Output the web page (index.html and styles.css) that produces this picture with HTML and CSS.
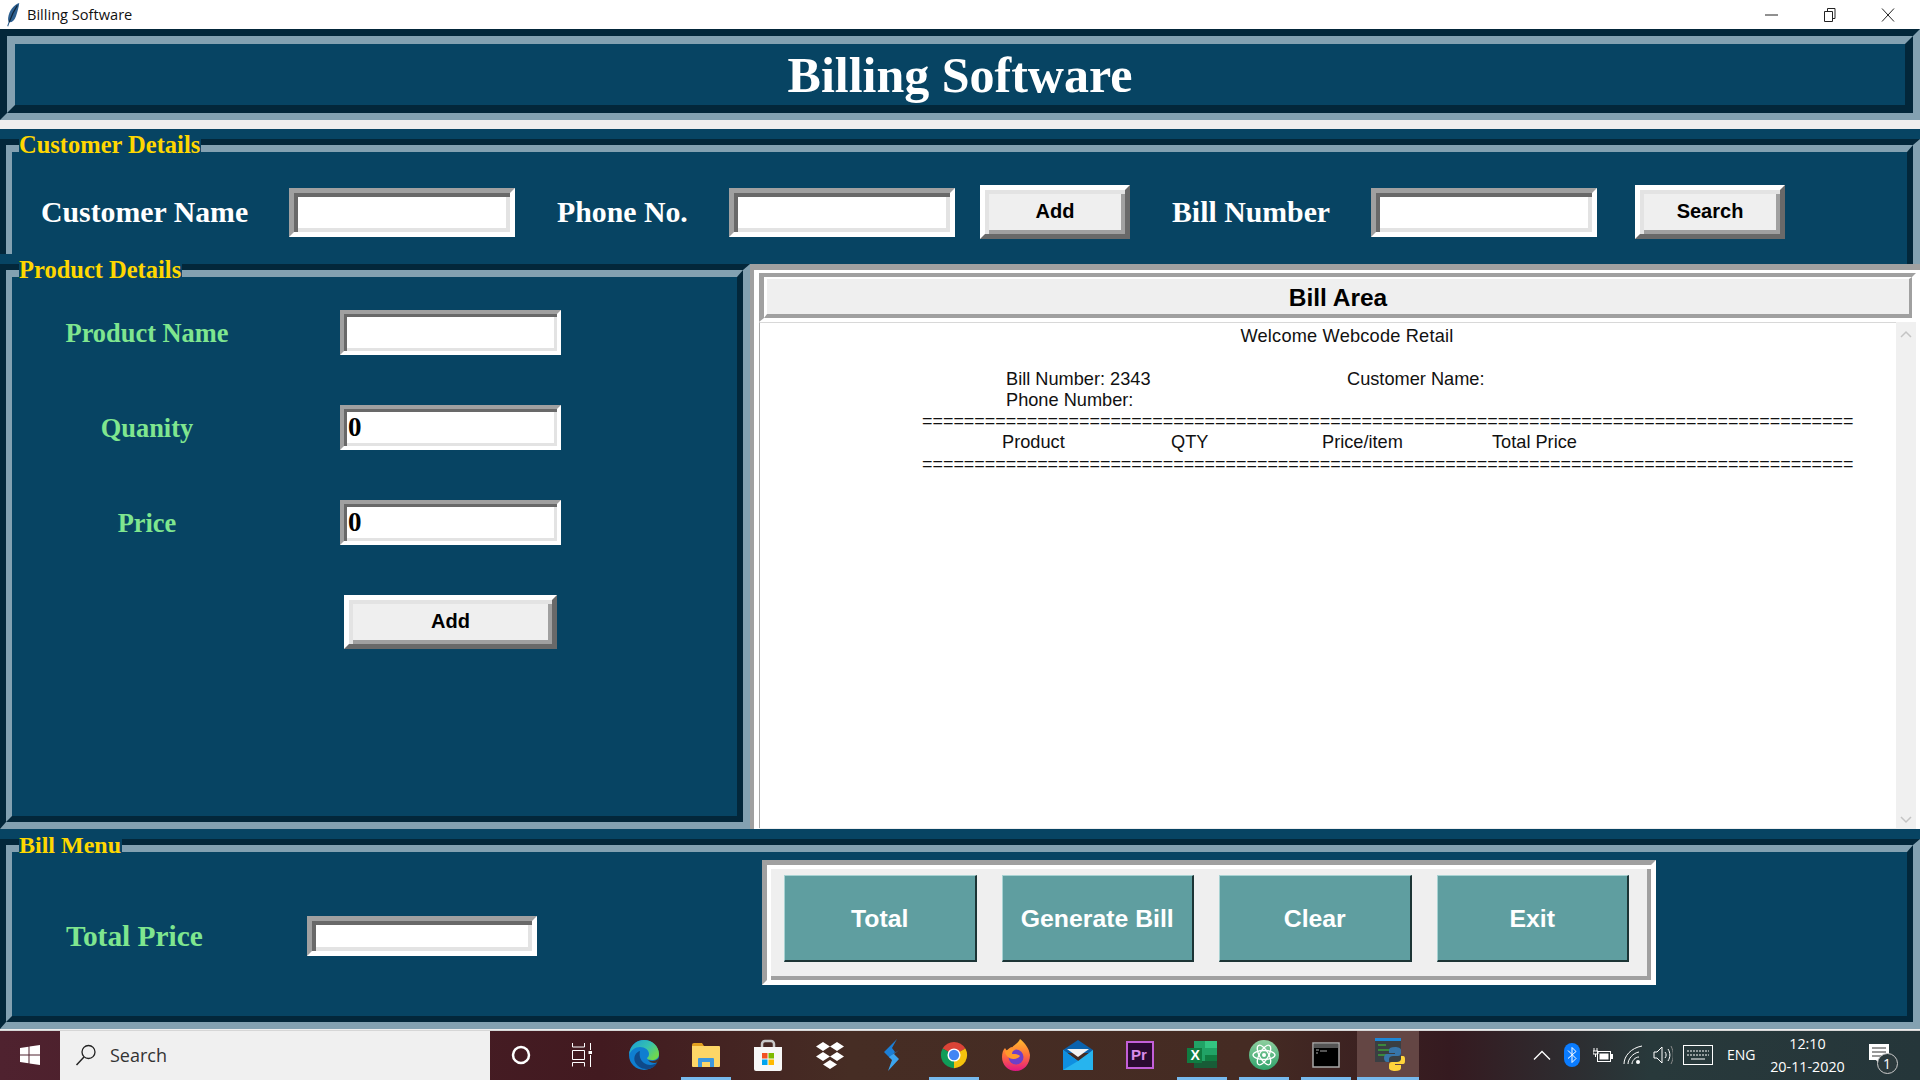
FILE: index.html
```html
<!DOCTYPE html>
<html lang="en">
<head>
    <meta charset="UTF-8">
    <meta name="viewport" content="width=device-width, initial-scale=1.0">
    <title>Billing Software</title>
    <link rel="stylesheet" href="styles.css">
</head>
<body>
    <div class="titlebar">
        <svg class="titlebar__icon" viewBox="0 0 16 26"><path d="M14.500 1C9 2.500 4 9 3 16c-.3 2 0 3.500.5 4.500L2 25l1 .5 1.500-4.500c3 0 5-2 6.500-6 1.500-4.500 3-9.500 3.500-14z" fill="#2d5f8f"/><path d="M12.500 3.500C9.500 8 6.500 14 4 21" stroke="#0f2438" stroke-width="1.200" fill="none"/></svg>
        <span class="titlebar__text">Billing Software</span>
        <div class="titlebar__controls">
            <svg viewBox="0 0 14 16"><path d="M0 8h13" stroke="#222" fill="none"/></svg>
            <svg viewBox="0 0 14 16"><path d="M1.500 4.500h8v10h-8zM4.500 4.500v-3h7.500v10h-2.500" stroke="#222" fill="none"/></svg>
            <svg viewBox="0 0 14 16"><path d="M1 1.500l12 13M13 1.500l-12 13" stroke="#222" fill="none"/></svg>
        </div>
    </div>

    <div class="app">
        <header class="header">
            <div class="header__in">
                <h1>Billing Software</h1>
            </div>
        </header>

        <section class="frame frame--customer">
            <span class="frame__legend">Customer Details</span>
            <div class="groove groove--open">
                <div class="groove__in">
                    <div class="customer-row">
                        <label class="field-label">Customer Name</label>
                        <div class="entry"></div>
                        <label class="field-label field-label--indent">Phone No.</label>
                        <div class="entry"></div>
                        <button class="btn btn--right">Add</button>
                        <label class="field-label field-label--indent">Bill Number</label>
                        <div class="entry"></div>
                        <button class="btn btn--right">Search</button>
                    </div>
                </div>
            </div>
        </section>

        <div class="main">
            <section class="frame frame--product">
                <span class="frame__legend">Product Details</span>
                <div class="groove">
                    <div class="groove__in">
                        <div class="product-form">
                            <label class="product-label">Product Name</label>
                            <div class="entry entry--small"></div>
                            <label class="product-label">Quanity</label>
                            <div class="entry entry--small">0</div>
                            <label class="product-label">Price</label>
                            <div class="entry entry--small">0</div>
                            <button class="btn btn--add">Add</button>
                        </div>
                    </div>
                </div>
            </section>

            <section class="bill">
                <div class="bill__in">
                    <div class="bill__title">
                        <div class="bill__title-in">Bill Area</div>
                    </div>
                    <div class="bill__body">
                        <div class="bill__text">
                            <div class="bill__center">Welcome Webcode Retail</div>
                            <div class="bill__row bill__row--blank"></div>
                            <div class="bill__row bill__row--info"><span class="bill__c-info">Bill Number: 2343</span><span>Customer Name:</span></div>
                            <div class="bill__row bill__row--info"><span>Phone Number:</span></div>
                            <div class="bill__row bill__row--rule">=========================================================================================</div>
                            <div class="bill__row bill__row--head"><span class="bill__c1">Product</span><span class="bill__c2">QTY</span><span class="bill__c3">Price/item</span><span>Total Price</span></div>
                            <div class="bill__row bill__row--rule">=========================================================================================</div>
                        </div>
                        <div class="scrollbar">
                            <svg viewBox="0 0 12 8"><path d="M1 7l5-5 5 5" stroke="#c4c4c4" stroke-width="1.500" fill="none"/></svg>
                            <svg viewBox="0 0 12 8"><path d="M1 1l5 5 5-5" stroke="#c4c4c4" stroke-width="1.500" fill="none"/></svg>
                        </div>
                    </div>
                </div>
            </section>
        </div>

        <section class="frame frame--menu">
            <span class="frame__legend">Bill Menu</span>
            <div class="groove">
                <div class="groove__in">
                    <div class="menu-row">
                        <div class="total">
                            <label class="product-label product-label--total">Total Price</label>
                            <div class="entry entry--total"></div>
                        </div>
                        <div class="actions">
                            <button class="action">Total</button>
                            <button class="action">Generate Bill</button>
                            <button class="action">Clear</button>
                            <button class="action">Exit</button>
                        </div>
                    </div>
                </div>
            </div>
        </section>
    </div>

    <footer class="taskbar">
        <div class="taskbar__start">
            <svg width="20" height="20" viewBox="0 0 20 20"><path d="M0 3l8.500-1.300v7.700H0zM9.500 1.500L20 0v9.400H9.500zM0 10.500h8.500v7.800L0 17zM9.500 10.500H20V20L9.500 18.500z" fill="#fff"/></svg>
        </div>
        <div class="taskbar__search">
            <svg width="22" height="22" viewBox="0 0 22 22"><circle cx="13.500" cy="8" r="6.500" stroke="#222" stroke-width="1.300" fill="none"/><path d="M9 13l-7.500 8" stroke="#222" stroke-width="1.500"/></svg>
            <span>Search</span>
        </div>

        <div class="slot slot--narrow">
            <svg width="20" height="20" viewBox="0 0 20 20"><circle cx="10" cy="10" r="8" stroke="#fff" stroke-width="2.500" fill="none"/></svg>
        </div>
        <div class="slot slot--narrow">
            <svg width="20" height="24" viewBox="0 0 20 24"><path d="M.500 0v4h12V0M.500 23.500v-4h12v4M.500 7.500h12v9H.500zM18.500 0v7M18.500 12v12" stroke="#fff" fill="none"/><rect x="16.500" y="8" width="4" height="3" fill="#fff"/></svg>
        </div>
        <div class="slot">
            <svg width="32" height="32" viewBox="0 0 32 32">
                <defs>
                    <linearGradient id="edgeTop" x1="0" y1="0" x2="1" y2="0.600"><stop offset="0" stop-color="#1a9bd8"/><stop offset="0.600" stop-color="#35c1b0"/><stop offset="1" stop-color="#6fd84f"/></linearGradient>
                </defs>
                <circle cx="16" cy="16" r="15" fill="#0f7ed0"/>
                <path d="M1 16C2 6 9 1 16 1c8 0 15 6 15 14 0 4-3 6-7 6-3 0-5-1-5-2 1-1 2-2 2-4 0-4-4-7-9-7-5 0-9 3-11 8z" fill="url(#edgeTop)"/>
                <path d="M12 12c-4 1-7 6-5 11 2 4 6 7 11 7 5 0 9-2 11-6-3 2-9 3-13 0-4-3-5-8-4-12z" fill="#0f4a8a"/>
                <path d="M20 21c4 2 8 1 11-2l-1 4c-3 2-8 1-10-2z" fill="#46302a"/>
            </svg>
        </div>
        <div class="slot slot--active">
            <svg width="30" height="26" viewBox="0 0 30 26"><path d="M1 3a2 2 0 0 1 2-2h8l2 3H1z" fill="#e2a01f"/><path d="M1 4h27a1 1 0 0 1 1 1v19a1 1 0 0 1-1 1H2a1 1 0 0 1-1-1z" fill="#fdd667"/><path d="M7 25v-8a1 1 0 0 1 1-1h14a1 1 0 0 1 1 1v8h-4v-5h-8v5z" fill="#3d98de"/></svg>
        </div>
        <div class="slot">
            <svg width="30" height="32" viewBox="0 0 30 32"><path d="M9 10V5a3 3 0 0 1 3-3h6a3 3 0 0 1 3 3v5" stroke="#c9c9c9" stroke-width="2.500" fill="none"/><path d="M1 8h28v22a2 2 0 0 1-2 2H3a2 2 0 0 1-2-2z" fill="#f7f7f7"/><rect x="9" y="14" width="5.500" height="5.500" fill="#f25022"/><rect x="15.500" y="14" width="5.500" height="5.500" fill="#7fba00"/><rect x="9" y="20.500" width="5.500" height="5.500" fill="#00a4ef"/><rect x="15.500" y="20.500" width="5.500" height="5.500" fill="#ffb900"/></svg>
        </div>
        <div class="slot">
            <svg width="30" height="28" viewBox="0 0 30 28"><path d="M8 1l7 4.500-7 4.500-7-4.500zM22 1l7 4.500-7 4.500-7-4.500zM8 11l7 4.500-7 4.500-7-4.500zM22 11l7 4.500-7 4.500-7-4.500zM15 19l7 4.500-7 4.500-7-4.500z" fill="#fff"/></svg>
        </div>
        <div class="slot">
            <svg width="18" height="32" viewBox="0 0 18 32"><path d="M14 0L1 13l6 6 5-6-3-4z" fill="#1c7fd6"/><path d="M16 11l-5 4 5 5-11 12 4-11-3-3z" fill="#3ca5ef"/></svg>
        </div>
        <div class="slot slot--active">
            <svg width="30" height="30" viewBox="0 0 32 32"><path d="M16 16L3.880 9A14 14 0 0 1 28.120 9z" fill="#db4437"/><path d="M16 16L28.120 9A14 14 0 0 1 16 30z" fill="#f4c20d"/><path d="M16 16L16 30A14 14 0 0 1 3.880 9z" fill="#0f9d58"/><circle cx="16" cy="16" r="7" fill="#fff"/><circle cx="16" cy="16" r="5.500" fill="#4285f4"/></svg>
        </div>
        <div class="slot">
            <svg width="30" height="32" viewBox="0 0 30 32">
                <defs><linearGradient id="foxBody" x1="0" y1="0" x2="0" y2="1"><stop offset="0" stop-color="#ffbd2e"/><stop offset="0.500" stop-color="#ff7139"/><stop offset="1" stop-color="#e31587"/></linearGradient></defs>
                <path d="M19 0c5 4 9 9 10 16 0 9-6 16-14 16S1 26 1 18c0-4 1-7 3-9l2 3c1-2 3-4 6-4-2 0 5-3 7-8z" fill="url(#foxBody)"/>
                <circle cx="15" cy="18" r="7.500" fill="#6e3fc8"/>
                <path d="M4 12c3-2 8-3 11-1-3 0-4 2-4 4 3 0 6 0 8 2-3 4-10 4-13 0-1-1-2-3-2-5z" fill="#ff9a2b"/>
            </svg>
        </div>
        <div class="slot">
            <svg width="30" height="30" viewBox="0 0 30 30"><path d="M0 10L15 0l15 10v3H0z" fill="#0a62ad"/><path d="M0 10l15 11 15-11v20H0z" fill="#27b4ee"/><path d="M0 30V10l15 11z" fill="#0f8fe0"/><path d="M4 9h22l-11 8z" fill="#f3f3f3"/></svg>
        </div>
        <div class="slot">
            <svg width="28" height="28" viewBox="0 0 28 28"><rect x="1" y="1" width="26" height="26" fill="#2a0a30" stroke="#c35fd8" stroke-width="2"/><text class="icon-pr" x="5" y="19">Pr</text></svg>
        </div>
        <div class="slot slot--active">
            <svg width="30" height="28" viewBox="0 0 30 28"><rect x="7" y="0" width="23" height="27" fill="#21a366"/><rect x="18" y="0" width="12" height="7" fill="#33c481"/><rect x="18" y="14" width="12" height="7" fill="#107c41"/><rect x="7" y="20" width="23" height="7" fill="#185c37"/><rect x="0" y="7" width="15" height="15" fill="#107c41"/><text class="icon-xl" x="3.500" y="19">X</text></svg>
        </div>
        <div class="slot slot--active">
            <svg width="30" height="30" viewBox="0 0 30 30">
                <defs><linearGradient id="atomBody" x1="0" y1="0" x2="0" y2="1"><stop offset="0" stop-color="#8fcf9f"/><stop offset="1" stop-color="#2ea36a"/></linearGradient></defs>
                <circle cx="15" cy="15" r="15" fill="url(#atomBody)"/>
                <g fill="none" stroke="#fff" stroke-width="1.300"><ellipse cx="15" cy="15" rx="11" ry="4.500"/><ellipse cx="15" cy="15" rx="11" ry="4.500" transform="rotate(60 15 15)"/><ellipse cx="15" cy="15" rx="11" ry="4.500" transform="rotate(120 15 15)"/></g>
                <circle cx="15" cy="15" r="2" fill="#fff"/>
            </svg>
        </div>
        <div class="slot slot--active">
            <svg width="28" height="26" viewBox="0 0 28 26"><rect x="1" y="1" width="26" height="24" fill="#000" stroke="#a9a9a9" stroke-width="1.500"/><rect x="2" y="2" width="24" height="4" fill="#555"/><path d="M4 8h3M4 11h2M8 9h7" stroke="#aaa"/></svg>
        </div>
        <div class="slot slot--current">
            <svg class="slot__python" width="30" height="34" viewBox="0 0 30 34"><rect x="0" y="0" width="26" height="24" fill="#3a3f43"/><rect x="0" y="0" width="26" height="3" fill="#1f88d8"/><path d="M3 7h8M3 12h14M3 17h9" stroke="#3da13b" stroke-width="1.500"/><path d="M20 9c-4 0-6 1-6 3v3h6v1h-8c-2 0-3 2-3 4s1 4 3 4h2v-3c0-2 2-3 4-3h5c2 0 3-1 3-3v-3c0-2-3-3-6-3z" fill="#3775a9"/><path d="M20 33c4 0 6-1 6-3v-3h-6v-1h8c2 0 2-2 2-4s0-4-2-4h-2v3c0 2-2 3-4 3h-5c-2 0-3 1-3 3v3c0 2 3 3 6 3z" fill="#ffd43b"/></svg>
        </div>

        <div class="tray">
            <svg class="tray__chevron" width="18" height="12" viewBox="0 0 18 12"><path d="M1 10.500l8-8 8 8" stroke="#fff" stroke-width="1.300" fill="none"/></svg>
            <svg class="tray__bt" width="16" height="24" viewBox="0 0 16 24"><rect width="16" height="24" rx="8" fill="#0a7cff"/><path d="M4 7.500l8 8-4 4V4.500l4 4-8 7" stroke="#fff" fill="none"/></svg>
            <svg class="tray__battery" width="20" height="16" viewBox="0 0 20 16"><path d="M1 1v3M4 1v3M0 4h5v3H0zM2.500 7v3" stroke="#fff" fill="none"/><rect x="4.500" y="4.500" width="13" height="10" fill="none" stroke="#fff"/><rect x="6.500" y="6.500" width="9" height="6" fill="#fff"/><rect x="18" y="7" width="2" height="5" fill="#fff"/></svg>
            <svg class="tray__wifi" width="20" height="20" viewBox="0 0 20 20"><path d="M1 19C1 11 8 3 19 1M5 19c0-5 5-11 11-12M9 19c0-3 3-7 7-7" stroke="#fff" fill="none"/><circle cx="15" cy="17" r="2" fill="#fff"/></svg>
            <svg class="tray__volume" width="20" height="20" viewBox="0 0 20 20"><path d="M1 7h3l5-5v16l-5-5H1zM12 7c1.500 2 1.500 4 0 6M15 4c2.500 4 2.500 8 0 12" stroke="#fff" fill="none"/><path d="M18 1c3 6 3 12 0 18" stroke="#8a8a8a" fill="none"/></svg>
            <svg class="tray__keyboard" width="30" height="20" viewBox="0 0 30 20"><rect x=".5" y=".5" width="29" height="19" fill="none" stroke="#fff"/><path d="M4 6h22M4 10h22" stroke="#fff" stroke-dasharray="2 1" fill="none"/><path d="M8 14h14" stroke="#fff" fill="none"/></svg>
            <span class="tray__lang">ENG</span>
            <div class="tray__clock"><span>12:10</span><span>20-11-2020</span></div>
            <div class="tray__notify">
                <svg width="22" height="22" viewBox="0 0 22 22"><path d="M1 1h20v16H1z" fill="#fff"/><path d="M4 5h14M4 9h14M4 13h10" stroke="#333"/><path d="M8 17l4 5 1-5z" fill="#fff"/></svg>
                <span class="tray__badge">1</span>
            </div>
        </div>
    </footer>
</body>
</html>
```
FILE: styles.css
```css
* {
    box-sizing: border-box;
}

html, body {
    margin: 0;
    padding: 0;
}

body {
    width: 1920px;
    height: 1080px;
    overflow: hidden;
    background-color: #efefef;
    font-family: "Liberation Sans", Arial, sans-serif;
}

/* window title bar */
.titlebar {
    display: flex;
    align-items: center;
    height: 29px;
    padding-left: 5px;
    background-color: #fff;
}

.titlebar__icon {
    width: 16px;
    height: 25px;
}

.titlebar__text {
    margin-left: 6px;
    margin-top: -2px;
    font-family: "Open Sans", sans-serif;
    font-size: 14.600px;
    color: #111;
}

.titlebar__controls {
    display: flex;
    gap: 44px;
    margin-left: auto;
    padding-right: 25px;
}

.titlebar__controls svg {
    width: 14px;
    height: 16px;
}

/* main window */
.app {
    height: 1001px;
    background-color: #efefef;
}

.header {
    height: 91px;
    border-style: solid;
    border-width: 7px;
    border-color: #03273a #83a1b1 #83a1b1 #03273a;
}

.header__in {
    height: 77px;
    border-style: solid;
    border-width: 8px;
    border-color: #83a1b1 #03273a #03273a #83a1b1;
    background-color: #074463;
    text-align: center;
}

.header__in h1 {
    margin: 0;
    font-family: "Liberation Serif", "Times New Roman", serif;
    font-size: 50px;
    font-weight: bold;
    line-height: 62px;
    color: #fff;
}

.frame {
    position: relative;
    padding-top: 10px;
    background-color: #074463;
}

.frame__legend {
    position: absolute;
    left: 19px;
    top: 0;
    height: 32px;
    padding-right: 1px;
    font-family: "Liberation Serif", "Times New Roman", serif;
    font-size: 24.500px;
    font-weight: bold;
    line-height: 32px;
    color: #ffd700;
    background-color: #074463;
}

.frame--customer {
    margin-top: 9px;
    height: 135px;
}

.frame--product {
    width: 750px;
    height: 575px;
    margin-top: -10px;
    flex: none;
}

.frame--menu {
    height: 200px;
}

.frame--menu .frame__legend {
    font-size: 24px;
}

/* tk groove relief: two nested borders */
.groove {
    height: 100%;
    border-style: solid;
    border-width: 6px 7px 7px 6px;
    border-color: #03273a #83a1b1 #83a1b1 #03273a;
}

.groove__in {
    height: 100%;
    border-style: solid;
    border-width: 7px 6px 6px 6px;
    border-color: #83a1b1 #03273a #03273a #83a1b1;
}

.groove--open {
    border-bottom-width: 0;
}

.groove--open .groove__in {
    border-bottom-width: 0;
}

.customer-row {
    display: grid;
    grid-template-columns: 247px 226px 214px 226px 175px 241px 226px 188px;
    align-items: center;
    padding-top: 33px;
    padding-left: 30px;
    height: 87px;
}

.field-label {
    margin-left: -1px;
    font-family: "Liberation Serif", "Times New Roman", serif;
    font-size: 29.800px;
    font-weight: bold;
    color: #fff;
}

.field-label--indent {
    padding-left: 43px;
}

/* sunken entry */
.entry {
    height: 49px;
    border-style: solid;
    border-width: 5px;
    border-color: #a0a0a0 #fff #fff #a0a0a0;
    background-color: #fff;
    box-shadow: inset 4px 4px 0 #696969, inset -4px -4px 0 #e3e3e3;
    padding-left: 4px;
    font-family: "Liberation Serif", "Times New Roman", serif;
    font-size: 27px;
    font-weight: bold;
    line-height: 35px;
    color: #000;
}

.entry--small {
    height: 45px;
    border-width: 4px;
    box-shadow: inset 3px 3px 0 #696969, inset -3px -3px 0 #e3e3e3;
    line-height: 36px;
}

.entry--total {
    width: 230px;
    height: 40px;
}

.btn {
    width: 150px;
    height: 54px;
    padding: 0 0 2px;
    border-style: solid;
    border-width: 5px;
    border-color: #fff #696969 #696969 #fff;
    background-color: #efefef;
    box-shadow: inset 4px 4px 0 #e3e3e3, inset -4px -4px 0 #a0a0a0;
    font-family: "Liberation Sans", Arial, sans-serif;
    font-size: 20px;
    font-weight: bold;
    color: #000;
}

.btn--right {
    justify-self: end;
}

.btn--add {
    grid-column: 2;
    justify-self: center;
    width: 213px;
}

.main {
    display: flex;
    height: 565px;
}

.product-form {
    display: grid;
    grid-template-columns: 328px 221px;
    grid-auto-rows: 45px;
    row-gap: 50px;
    align-items: center;
    padding-top: 33px;
}

.product-label {
    width: 270px;
    padding-top: 2px;
    font-family: "Liberation Serif", "Times New Roman", serif;
    font-size: 26.400px;
    font-weight: bold;
    text-align: center;
    color: #7fe68f;
}

.product-form .btn--add {
    align-self: start;
}

/* bill area */
.bill {
    flex: 1;
    background-color: #efefef;
    border-top: 6px solid #a0a0a0;
    border-left: 4px solid #a0a0a0;
}

.bill__in {
    display: flex;
    flex-direction: column;
    height: 100%;
    border-top: 3px solid #fff;
    border-left: 5px solid #fff;
    border-right: 4px solid #fff;
}

.bill__title {
    height: 49px;
    border-style: solid;
    border-width: 4px 4px 4px 5px;
    border-color: #a0a0a0 #fff #fff #a0a0a0;
}

.bill__title-in {
    height: 41px;
    border-style: solid;
    border-width: 2px 3px 4px 3px;
    border-color: #fff #a0a0a0 #a0a0a0 #fff;
    background-color: #efefef;
    font-size: 24.500px;
    font-weight: bold;
    line-height: 37px;
    text-align: center;
    color: #000;
}

.bill__body {
    display: flex;
    flex: 1;
    padding-bottom: 1px;
}

.bill__text {
    flex: 1;
    padding-top: 3px;
    background-color: #fff;
    border-top: 1px solid #d8d8d8;
    border-left: 1px solid #a8a8a8;
    font-size: 18.200px;
    line-height: 21.300px;
    color: #111;
}

.bill__center {
    padding-left: 38px;
    letter-spacing: 0.200px;
    text-align: center;
}

.bill__row {
    display: flex;
    height: 21.300px;
    white-space: nowrap;
}

.bill__row--info {
    padding-left: 246px;
}

.bill__c-info {
    width: 341px;
}

.bill__row--rule {
    padding-left: 162px;
    font-size: 17.930px;
}

.bill__row--head {
    padding-left: 242px;
}

.bill__c1 {
    width: 169px;
}

.bill__c2 {
    width: 151px;
}

.bill__c3 {
    width: 170px;
}

.scrollbar {
    display: flex;
    flex-direction: column;
    justify-content: space-between;
    align-items: center;
    width: 20px;
    padding: 8px 0 4px;
    background-color: #f0f0f0;
}

.scrollbar svg {
    width: 12px;
    height: 8px;
}

/* bill menu */
.menu-row {
    display: flex;
    align-items: flex-start;
    padding-left: 54px;
}

.total {
    display: flex;
    align-items: center;
    margin-top: 64px;
}

.product-label--total {
    width: 241px;
    padding-top: 0;
    font-size: 29.400px;
    text-align: left;
}

.actions {
    display: flex;
    gap: 25px;
    width: 894px;
    height: 125px;
    margin-top: 8px;
    margin-left: 225px;
    padding: 10px 0 0 17px;
    border-style: solid;
    border-width: 5px;
    border-color: #a0a0a0 #fff #fff #a0a0a0;
    background-color: #efefef;
    box-shadow: inset 4px 4px 0 #fff, inset -4px -4px 0 #a0a0a0;
}

.action {
    width: 192.500px;
    height: 87px;
    padding: 2px 0 0;
    border-style: solid;
    border-width: 1px 2px 2px 1px;
    border-color: #a8d2d2 #1c3435 #1c3435 #a8d2d2;
    background-color: #5f9ea0;
    font-family: "Liberation Sans", Arial, sans-serif;
    font-size: 24.800px;
    font-weight: bold;
    color: #fff;
}

/* windows taskbar */
.taskbar {
    display: flex;
    align-items: stretch;
    height: 50px;
    border-top: 1px solid #d6d6d6;
    background: linear-gradient(90deg, #4f222f 0, #421a20 600px, #462d24 850px, #452b23 1250px, #351a20 1450px, #28393b 1650px, #25363a 1920px);
}

.taskbar__start {
    display: flex;
    align-items: center;
    justify-content: center;
    width: 60px;
    padding-bottom: 2px;
}

.taskbar__search {
    display: flex;
    align-items: center;
    gap: 13px;
    width: 430px;
    padding-left: 15px;
    padding-bottom: 2px;
    background-color: #f0f0f0;
    font-family: "Open Sans", sans-serif;
    font-size: 18px;
    color: #333;
}

.slot {
    position: relative;
    display: flex;
    align-items: center;
    justify-content: center;
    width: 62px;
    padding-bottom: 2px;
}

.slot--narrow {
    width: 61.500px;
}

.slot--active::after,
.slot--current::after {
    content: "";
    position: absolute;
    left: 6px;
    right: 6px;
    bottom: 0;
    height: 3px;
    background-color: #76b9ed;
}

.slot--current {
    background-color: #644644;
}

.slot--current::after {
    left: 0;
    right: 0;
}

.slot__python {
    margin-left: 4px;
}

.icon-pr {
    font-family: "Liberation Sans", sans-serif;
    font-size: 15px;
    font-weight: bold;
    fill: #d98bea;
}

.icon-xl {
    font-family: "Liberation Sans", sans-serif;
    font-size: 14px;
    font-weight: bold;
    fill: #fff;
}

.tray {
    display: flex;
    align-items: center;
    margin-left: 114px;
    padding-bottom: 2px;
    color: #fff;
    font-family: "Open Sans", sans-serif;
}

.tray__bt {
    margin-left: 13px;
}

.tray__battery {
    margin-left: 13px;
}

.tray__wifi {
    margin-left: 10px;
}

.tray__volume {
    margin-left: 10px;
}

.tray__keyboard {
    margin-left: 10px;
}

.tray__lang {
    margin-left: 14px;
    font-size: 14px;
}

.tray__clock {
    display: flex;
    flex-direction: column;
    align-items: center;
    width: 78px;
    margin-left: 13px;
    font-size: 14.300px;
    line-height: 23px;
}

.tray__notify {
    position: relative;
    display: flex;
    margin-left: 21px;
    margin-top: -2px;
}

.tray__badge {
    position: absolute;
    left: 9px;
    top: 10px;
    width: 21px;
    height: 21px;
    border: 1px solid #ccc;
    border-radius: 50%;
    background-color: #2c3a3d;
    font-size: 14px;
    line-height: 19px;
    text-align: center;
}
```
